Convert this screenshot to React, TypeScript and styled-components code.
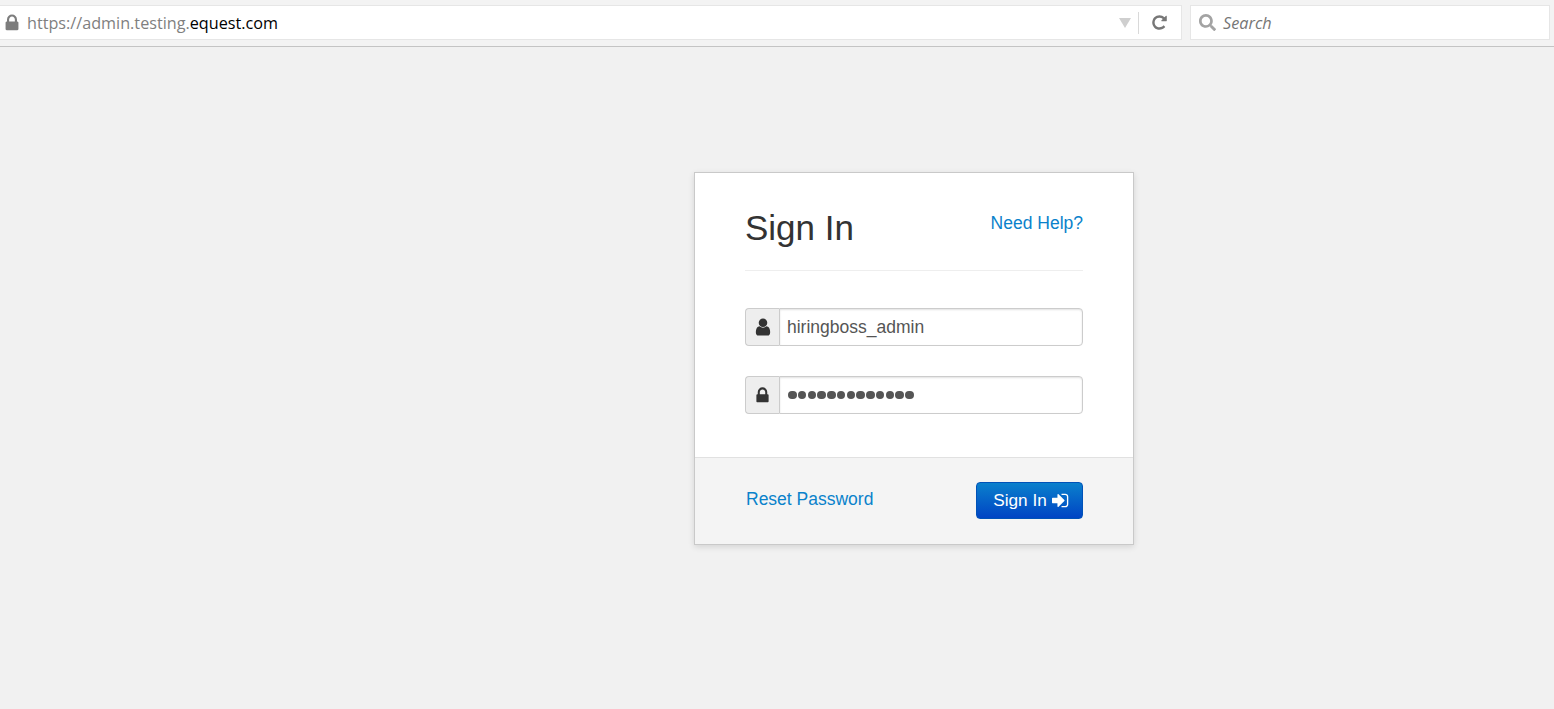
import React from "react";
import styled, { createGlobalStyle } from "styled-components";
import { FaSearch } from "react-icons/fa";

const USER_PATH =
  "M1536 1399q0 109-62.5 187t-150.5 78h-854q-88 0-150.5-78t-62.5-187q0-85 8.5-160.5t31.5-152 58.5-131 94-89 134.5-34.5q131 128 313 128t313-128q76 0 134.5 34.5t94 89 58.5 131 31.5 152 8.5 160.5zm-256-887q0 159-112.5 271.5t-271.5 112.5-271.5-112.5-112.5-271.5 112.5-271.5 271.5-112.5 271.5 112.5 112.5 271.5z";
const LOCK_PATH =
  "M640 768h512v-192q0-106-75-181t-181-75-181 75-75 181v192zm832 96v576q0 40-28 68t-68 28h-960q-40 0-68-28t-28-68v-576q0-40 28-68t68-28h32v-192q0-184 132-316t316-132 316 132 132 316v192h32q40 0 68 28t28 68z";
const SIGN_IN_PATH =
  "M1184 896q0 26-19 45l-544 544q-19 19-45 19t-45-19-19-45v-288h-448q-26 0-45-19t-19-45v-384q0-26 19-45t45-19h448v-288q0-26 19-45t45-19 45 19l544 544q19 19 19 45zm352-352v704q0 119-84.5 203.5t-203.5 84.5h-320q-13 0-22.5-9.5t-9.5-22.5q0-4-1-20t-.5-26.5 3-23.5 10-19.5 20.5-6.5h320q66 0 113-47t47-113v-704q0-66-47-113t-113-47h-312l-11.5-1-11.5-3-8-5.5-7-9-2-13.5q0-4-1-20t-.5-26.5 3-23.5 10-19.5 20.5-6.5h320q119 0 203.5 84.5t84.5 203.5z";
const RELOAD_PATH =
  "M1664 256v448q0 26-19 45t-45 19h-448q-42 0-59-40-17-39 14-69l138-138q-148-137-349-137-104 0-198.5 40.5t-163.5 109.5-109.5 163.5-40.5 198.5 40.5 198.5 109.5 163.5 163.5 109.5 198.5 40.5q119 0 225-52t179-147q7-10 23-12 15 0 25 9l137 138q9 8 9.5 20.5t-7.5 22.5q-109 132-264 204.5t-327 72.5q-156 0-298-61t-245-164-164-245-61-298 61-298 164-245 245-164 298-61q147 0 284.5 55.5t244.5 156.5l130-129q29-31 70-14 39 17 39 59z";

const GlobalStyle = createGlobalStyle`
  html, body {
    margin: 0;
    padding: 0;
    background: #f1f1f1;
    font-family: "Liberation Sans", Arial, sans-serif;
  }
`;

const Page = styled.div`
  min-height: 709px;
  background: #f1f1f1;
  overflow: hidden;
`;

const Toolbar = styled.div`
  display: flex;
  gap: 8px;
  height: 47px;
  box-sizing: border-box;
  padding: 5px 4px 6px 0;
  background: #f3f3f3;
  border-bottom: 1px solid #c4c4c4;
`;

const UrlBar = styled.div`
  flex: 1;
  display: flex;
  align-items: center;
  background: #fff;
  border: 1px solid #e6e6e6;
  border-left: 0;
  padding: 0 13px 0 2px;
`;

const Glyph = styled.svg<{ $size: number; $color?: string }>`
  width: ${(p) => p.$size}px;
  height: ${(p) => p.$size}px;
  flex-shrink: 0;
  fill: ${(p) => p.$color ?? "currentColor"};
`;

const UrlText = styled.span`
  flex: 1;
  margin-left: 5px;
  font-family: "Open Sans", sans-serif;
  font-size: 16.2px;
  color: #7f7f7f;
`;

const UrlHost = styled.span`
  color: #000;
`;

const DropArrow = styled.span`
  width: 0;
  height: 0;
  border-left: 6px solid transparent;
  border-right: 6px solid transparent;
  border-top: 10px solid #cfcfcf;
  margin-right: 7px;
`;

const Divider = styled.span`
  width: 1px;
  height: 22px;
  background: #d9d9d9;
  margin-right: 12px;
`;

const SearchBar = styled.div`
  width: 360px;
  display: flex;
  align-items: center;
  gap: 7px;
  background: #fff;
  border: 1px solid #e6e6e6;
  box-sizing: border-box;
  padding-left: 8px;
`;

const SearchIcon = styled(FaSearch)`
  width: 17px;
  height: 17px;
  color: #a3a3a3;
`;

const SearchText = styled.span`
  font-family: "Open Sans", sans-serif;
  font-style: italic;
  font-size: 16.25px;
  color: #767676;
`;

const Card = styled.div`
  width: 440px;
  box-sizing: border-box;
  margin: 125px 0 0 694px;
  background: #fff;
  border: 1px solid #c9c9c9;
  box-shadow: 0 2px 6px rgba(0, 0, 0, 0.12);
`;

const CardBody = styled.div`
  padding: 33px 50px 43px;
`;

const CardHeader = styled.div`
  display: flex;
  justify-content: space-between;
  height: 64px;
  border-bottom: 1px solid #eeeeee;
  margin-bottom: 37px;
`;

const Title = styled.h1`
  margin: 0;
  font-size: 35px;
  font-weight: 400;
  line-height: 44px;
  color: #333;
`;

const TextLink = styled.a<{ $top?: number }>`
  font-size: 17.5px;
  line-height: 26px;
  color: #0a82cb;
  text-decoration: none;
  margin-top: ${(p) => p.$top ?? 0}px;
`;

const Field = styled.div`
  display: flex;
  height: 38px;
  margin-bottom: 30px;
  &:last-child {
    margin-bottom: 0;
  }
`;

const Addon = styled.div`
  width: 34px;
  box-sizing: border-box;
  display: flex;
  align-items: center;
  justify-content: center;
  background: #eeeeee;
  border: 1px solid #cccccc;
  border-right: 0;
  border-radius: 4px 0 0 4px;
  color: #333;
`;

const InputBox = styled.div`
  flex: 1;
  display: flex;
  align-items: center;
  padding-left: 7px;
  background: #fff;
  border: 1px solid #cccccc;
  border-radius: 0 4px 4px 0;
  box-shadow: inset 0 1px 2px rgba(0, 0, 0, 0.12);
  font-size: 17.5px;
  color: #555;
`;

const Dots = styled.span`
  display: flex;
  gap: 1.25px;
  padding-left: 1px;
`;

const Dot = styled.span`
  width: 8.5px;
  height: 8.5px;
  border-radius: 50%;
  background: #555;
`;

const CardFooter = styled.div`
  display: flex;
  align-items: center;
  justify-content: space-between;
  height: 87px;
  box-sizing: border-box;
  padding: 0 50px 2px 51px;
  background: #f4f4f4;
  border-top: 1px solid #e1e1e1;
`;

const SubmitButton = styled.button`
  width: 107px;
  height: 37px;
  display: flex;
  align-items: center;
  justify-content: center;
  gap: 5px;
  padding: 0 0 0 5px;
  border: 1px solid #0052b8;
  border-radius: 4px;
  background: linear-gradient(to bottom, #0a80cc, #0044c4);
  color: #fff;
  font-family: inherit;
  font-size: 17.2px;
`;

const FaIcon: React.FC<{ d: string; size: number; color?: string }> = ({ d, size, color }) => (
  <Glyph viewBox="0 0 1792 1792" $size={size} $color={color}>
    <path d={d} />
  </Glyph>
);

const App: React.FC = () => {
  return (
    <Page>
      <GlobalStyle />
      <Toolbar>
        <UrlBar>
          <FaIcon d={LOCK_PATH} size={20} color="#7d7d7d" />
          <UrlText>
            https://admin.testing.<UrlHost>equest.com</UrlHost>
          </UrlText>
          <DropArrow />
          <Divider />
          <FaIcon d={RELOAD_PATH} size={17} color="#777" />
        </UrlBar>
        <SearchBar>
          <SearchIcon />
          <SearchText>Search</SearchText>
        </SearchBar>
      </Toolbar>
      <Card>
        <CardBody>
          <CardHeader>
            <Title>Sign In</Title>
            <TextLink href="#" $top={4}>
              Need Help?
            </TextLink>
          </CardHeader>
          <Field>
            <Addon>
              <FaIcon d={USER_PATH} size={20} />
            </Addon>
            <InputBox>hiringboss_admin</InputBox>
          </Field>
          <Field>
            <Addon>
              <FaIcon d={LOCK_PATH} size={19} />
            </Addon>
            <InputBox>
              <Dots>
                {Array.from({ length: 13 }).map((_, i) => (
                  <Dot key={i} />
                ))}
              </Dots>
            </InputBox>
          </Field>
        </CardBody>
        <CardFooter>
          <TextLink href="#" $top={-2}>
            Reset Password
          </TextLink>
          <SubmitButton>
            Sign In <FaIcon d={SIGN_IN_PATH} size={19} />
          </SubmitButton>
        </CardFooter>
      </Card>
    </Page>
  );
};

export default App;
